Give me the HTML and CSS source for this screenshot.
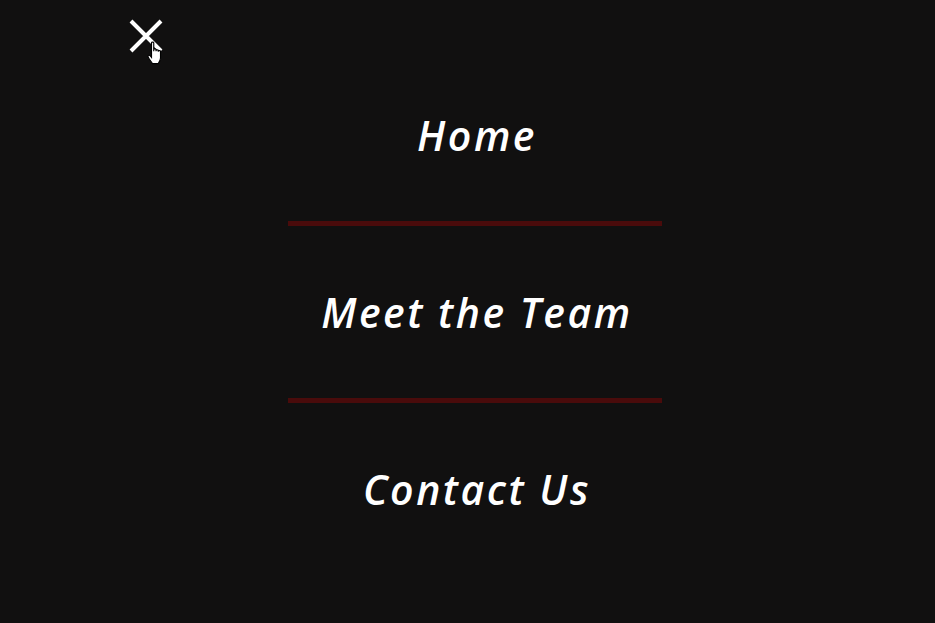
FILE: index.html
```html
<!DOCTYPE html>
<html lang="en">
<head>
<meta charset="utf-8">
<title>Menu</title>
<link rel="stylesheet" href="styles.css">
</head>
<body>
<div class="overlay">
  <button class="close" aria-label="Close menu">
    <svg width="34" height="34" viewBox="0 0 34 34" aria-hidden="true">
      <path d="M2 2 L32 32 M32 2 L2 32" stroke="#ffffff" stroke-width="4" stroke-linecap="butt" fill="none"/>
    </svg>
    <svg class="cursor" width="18" height="25" viewBox="0 0 16 22" aria-hidden="true">
      <path d="M4 1.5 C4 0.6 6 0.6 6 1.5 L6 9 L6 7.5 C6 6.6 8 6.6 8 7.5 L8 9 L8 8.3 C8 7.4 10 7.4 10 8.3 L10 9.5 L10 9 C10 8.1 12 8.1 12 9 L12 15 C12 17 11 18.5 10 20 L5 20 C4 18.5 1.5 15.5 1 14 C0.6 12.8 1.8 12 2.8 13 L4 14.5 Z" fill="#ffffff" stroke="#000000" stroke-width="1"/>
    </svg>
  </button>
  <nav class="menu">
    <ul class="menu-list">
      <li class="menu-item"><a href="#" class="menu-link">Home</a></li>
      <li class="menu-item"><a href="#" class="menu-link">Meet the Team</a></li>
      <li class="menu-item"><a href="#" class="menu-link">Contact Us</a></li>
    </ul>
  </nav>
</div>
</body>
</html>
```
FILE: styles.css
```css
html, body {
  margin: 0;
  padding: 0;
  height: 100%;
  background: #111010;
}

.overlay {
  position: relative;
  height: 100%;
  font-family: "Open Sans", "DejaVu Sans", sans-serif;
}

.close {
  position: absolute;
  left: 129px;
  top: 19px;
  width: 34px;
  height: 34px;
  padding: 0;
  border: 0;
  background: transparent;
  cursor: pointer;
}

.close svg {
  display: block;
}

.cursor {
  position: absolute;
  left: 18px;
  top: 22px;
}

.menu {
  display: flex;
  justify-content: center;
  padding-top: 49px;
  padding-left: 15px;
}

.menu-list {
  list-style: none;
  margin: 0;
  padding: 0;
  width: 374px;
  display: flex;
  flex-direction: column;
}

.menu-item {
  border-bottom: 5px solid #4a0b0b;
}

.menu-item:last-child {
  border-bottom: 0;
}

.menu-link {
  display: flex;
  align-items: center;
  justify-content: center;
  height: 172px;
  padding-left: 4px;
  color: #ffffff;
  text-decoration: none;
  font-size: 41px;
  font-style: italic;
  font-weight: 600;
  letter-spacing: 2.5px;
  white-space: nowrap;
}
```
